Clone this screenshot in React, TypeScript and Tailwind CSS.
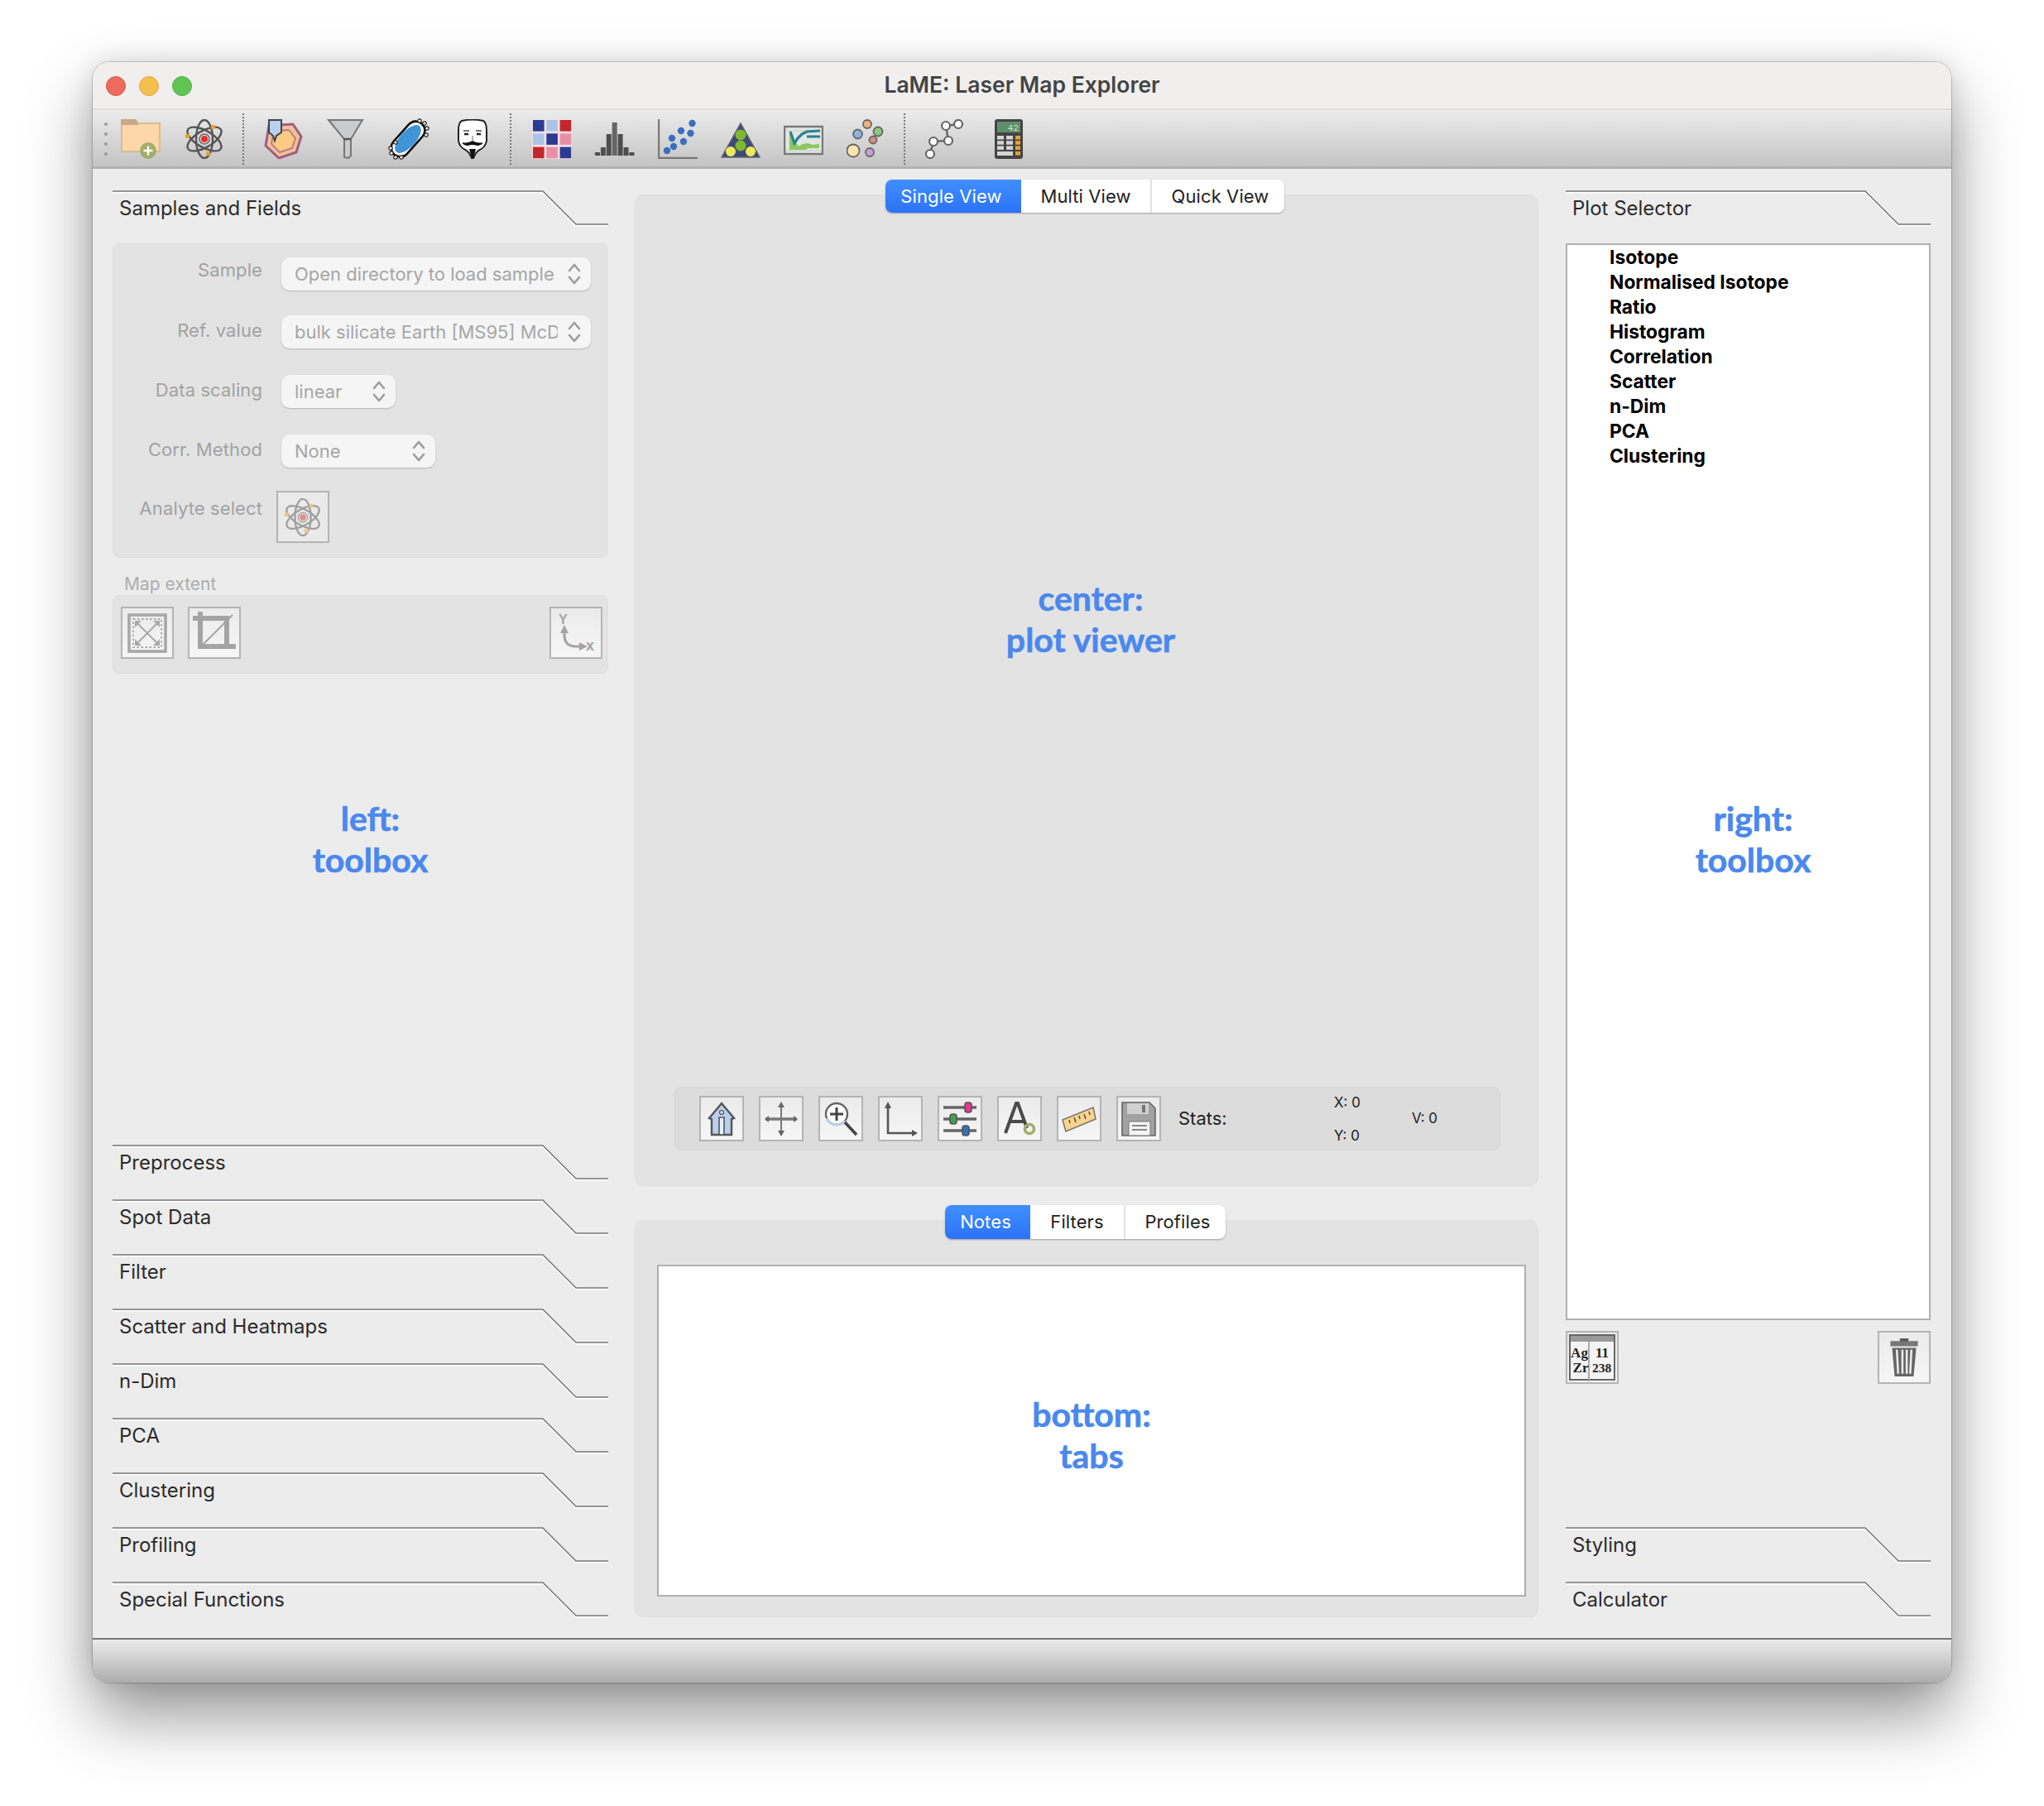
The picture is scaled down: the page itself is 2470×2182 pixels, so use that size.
import type { ReactNode } from "react";

const sans = "font-['Inter','Liberation_Sans',sans-serif]";

function AtomIcon({ size = 48 }: { size?: number }) {
  return (
    <svg width={size} height={size} viewBox="0 0 48 48" fill="none">
      <g stroke="#555" strokeWidth="2.4">
        <ellipse cx="24" cy="24" rx="10" ry="23" />
        <ellipse cx="24" cy="24" rx="10" ry="23" transform="rotate(60 24 24)" />
        <ellipse cx="24" cy="24" rx="10" ry="23" transform="rotate(120 24 24)" />
      </g>
      <circle cx="24" cy="24" r="6" fill="#ddd" stroke="#666" strokeWidth="1.5" />
      <circle cx="24" cy="24" r="4" fill="#e8302a" />
      <rect x="32" y="7" width="5" height="5" rx="1" fill="#efa02c" />
      <rect x="1" y="18" width="5" height="5" rx="1" fill="#efa02c" />
      <rect x="26" y="39" width="5" height="5" rx="1" fill="#efa02c" />
    </svg>
  );
}

function FolderIcon() {
  return (
    <svg width="48" height="48" viewBox="0 0 48 48">
      <rect x="1" y="5" width="46" height="34" fill="#fdd7a8" stroke="#dbbb96" strokeWidth="2" />
      <path d="M0 0h18l3 4v3H0Z" fill="#c9a885" />
      <circle cx="33" cy="38" r="10" fill="#a3ad6c" />
      <path d="M33 32.500v11M27.500 38h11" stroke="#fff" strokeWidth="2.4" />
    </svg>
  );
}

function RegionIcon() {
  return (
    <svg width="48" height="48" viewBox="0 0 48 48">
      <path d="M35 6 45 21 39 40 18 47 2 32 6 8Z" fill="#ecc39a" stroke="#a45c80" strokeWidth="3" />
      <path d="M30 13 38 23 34 35 19 40 9 30 12 14Z" fill="#fec985" stroke="#c07a80" strokeWidth="2" />
      <path d="M6 1h15v15l-6 4-2 6-2-6-5-4Z" fill="#b9d0ef" stroke="#444" strokeWidth="2" />
    </svg>
  );
}

function FunnelIcon() {
  return (
    <svg width="48" height="48" viewBox="0 0 48 48">
      <path d="M2 1h41L29 24v20l-3 3-5-1V24Z" fill="#c9cbcd" stroke="#777" strokeWidth="2" />
      <path d="M20 24h9" stroke="#555" strokeWidth="2.500" />
    </svg>
  );
}

function BlobIcon() {
  const nodes = [[36, 2], [42, 5], [45, 11], [44, 19], [7, 28], [1, 35], [2, 41], [7, 46], [14, 46]];
  return (
    <svg width="48" height="48" viewBox="0 0 48 48" overflow="visible">
      <g transform="translate(-2 0)">
        <rect x="-1" y="13" width="50" height="22" rx="11" transform="rotate(-48 24 24)" fill="#fff" stroke="#111" strokeWidth="2.6" />
        <ellipse cx="24" cy="24" rx="21" ry="9.5" transform="rotate(-48 24 24)" fill="#3f95d8" />
      </g>
      {nodes.map(([x, y], i) => (
        <circle key={i} cx={x} cy={y} r="2.2" fill="#fff" stroke="#222" strokeWidth="1.2" />
      ))}
    </svg>
  );
}

function MaskIcon() {
  return (
    <svg width="48" height="48" viewBox="0 0 48 48">
      <path d="M11 2Q24-1 37 2 41 4 41 14V26Q40 34 31 38L28 41 25 47H23L20 41 17 38Q8 34 7 26V14Q7 4 11 2Z" fill="#fff" stroke="#222" strokeWidth="2" />
      <path d="M13 14h7M28 14h7" stroke="#777" strokeWidth="2" />
      <path d="M14 18h5M29 18h5" stroke="#222" strokeWidth="2.4" />
      <path d="M24 20v6" stroke="#999" strokeWidth="1.5" />
      <path d="M12 29q6 1 12-2 6 3 12 2-4 3-7 2l-5-1-5 1q-3 1-7-2Z" fill="#111" stroke="#111" strokeWidth="1.4" />
      <path d="M20 36h8l-3 11h-2Z" fill="#111" />
    </svg>
  );
}

function HeatmapIcon() {
  const cells = ["#2b3a92", "#a9c4e6", "#c1272d", "#a9c4e6", "#2b3a92", "#e88fa3", "#c1272d", "#e88fa3", "#2b3a92"];
  return (
    <svg width="48" height="48" viewBox="0 0 48 48">
      <rect width="48" height="48" fill="#f6dfe4" />
      {cells.map((c, i) => (
        <rect key={i} x={1 + (i % 3) * 16.3} y={1 + Math.floor(i / 3) * 16.3} width="13.6" height="13.6" fill={c} />
      ))}
    </svg>
  );
}

function HistogramIcon() {
  const bars = [4, 10, 26, 40, 26, 10, 4];
  return (
    <svg width="48" height="48" viewBox="0 0 48 48">
      {bars.map((h, i) => (
        <rect key={i} x={i * 6.9} y={44 - h} width="6" height={h} fill={i === 3 ? "#666" : "#4e4e4e"} />
      ))}
    </svg>
  );
}

function ScatterIcon() {
  const dots = [[41.5, 5], [28, 14], [39.5, 17], [17, 23], [31, 27], [19, 33], [11, 38]];
  return (
    <svg width="48" height="48" viewBox="0 0 48 48">
      <path d="M1 0v47h47" fill="none" stroke="#777" strokeWidth="2.4" />
      {dots.map(([x, y], i) => (
        <circle key={i} cx={x} cy={y} r="4.2" fill="#3a6fbf" />
      ))}
    </svg>
  );
}

function TernaryIcon() {
  return (
    <svg width="48" height="48" viewBox="0 0 48 48">
      <path d="M24 5 47 46H1Z" fill="#3d4a7c" stroke="#666" strokeWidth="1.5" />
      <circle cx="24" cy="19" r="6.5" fill="#7fb82d" />
      <circle cx="24" cy="32" r="6.5" fill="#7fb82d" />
      <circle cx="12" cy="39" r="6" fill="#f0e858" />
      <circle cx="36" cy="39" r="6" fill="#f0e858" />
    </svg>
  );
}

function SpectrumIcon() {
  return (
    <svg width="48" height="48" viewBox="0 0 48 48">
      <rect x="1" y="9" width="46" height="33" fill="#e0e6e0" stroke="#777" strokeWidth="2.4" />
      <path d="M3 14h42M3 38h42" stroke="#c5cfc5" strokeWidth="1" />
      <path d="M8 16l4 16 3-2 3 4 5-3 6-1 6 2 7-1v3H30l-4 2H8Z" fill="#8cc860" stroke="#8cc860" strokeWidth="2" />
      <path d="M8 15l5 14 4-6 5-5 6-3 16-1M28 21h16" fill="none" stroke="#2b7f96" strokeWidth="3.200" />
    </svg>
  );
}

function ClustersIcon() {
  const dots = [
    [25, 6, 5, "#f0b080"],
    [38, 15, 5.5, "#8fc878"],
    [13.5, 18, 5.5, "#8fb0e0"],
    [32, 25, 4.5, "#e08a80"],
    [8, 38, 7.5, "#fde4a8"],
    [28, 40, 5, "#c8a0d8"],
  ] as const;
  return (
    <svg width="48" height="48" viewBox="0 0 48 48">
      {dots.map(([x, y, r, c], i) => (
        <circle key={i} cx={x} cy={y} r={r} fill={c} stroke="#666" strokeWidth="1.8" />
      ))}
    </svg>
  );
}

function NetworkIcon() {
  const nodes = [[41, 6], [26, 8], [29, 26], [11, 27], [7, 42]];
  return (
    <svg width="48" height="48" viewBox="0 0 48 48">
      <path d="M41 6 26 8 29 26 11 27 7 42" fill="none" stroke="#666" strokeWidth="2.4" />
      {nodes.map(([x, y], i) => (
        <circle key={i} cx={x} cy={y} r="5" fill="#fff" stroke="#666" strokeWidth="2.2" />
      ))}
    </svg>
  );
}

function CalculatorIcon() {
  const keys = [0, 1, 2].flatMap((r) => [0, 1].map((c) => [c, r]));
  return (
    <svg width="34" height="48" viewBox="0 0 34 48">
      <rect width="34" height="48" rx="3" fill="#444" />
      <rect x="3" y="3" width="28" height="13" fill="#5f8f6a" />
      <text x="29" y="14" textAnchor="end" fontSize="11" fontFamily="'Liberation Mono', monospace" fill="#cfe5d0">42</text>
      {keys.map(([c, r], i) => (
        <rect key={i} x={3 + c * 11} y={20 + r * 6.2} width="8" height="4.5" fill="#d5d5d5" />
      ))}
      <rect x="3" y="39" width="19" height="5" fill="#d5d5d5" />
      {[20, 26.2, 32.4, 39].map((y) => (
        <rect key={y} x="25" y={y} width="6" height="4.5" fill="#f0a030" />
      ))}
    </svg>
  );
}

function ExtentIcon() {
  return (
    <svg width="50" height="50" viewBox="0 0 50 50" fill="none" stroke="#a8a8a8">
      <rect x="3" y="3" width="44" height="44" strokeWidth="3.600" />
      <rect x="8" y="8" width="34" height="34" strokeWidth="1.800" strokeDasharray="2.500 2.500" />
      <path d="M11 11 39 39M39 11 11 39" strokeWidth="2" />
      <path d="M10 10h8l-8 8ZM40 10h-8l8 8ZM10 40h8l-8-8ZM40 40h-8l8-8Z" fill="#a8a8a8" stroke="none" />
    </svg>
  );
}

function CropIcon() {
  return (
    <svg width="52" height="52" viewBox="0 0 52 52" fill="none" stroke="#a4a4a4">
      <path d="M0 8h41v36M9 0v42h43" strokeWidth="6" />
      <path d="M9 43 48 4" strokeWidth="2" />
    </svg>
  );
}

function AxesXYIcon() {
  return (
    <svg width="52" height="52" viewBox="0 0 52 52" fill="none" stroke="#a4a4a4">
      <text x="5" y="15" fontSize="16" fontWeight="700" fontFamily="'Liberation Sans', sans-serif" fill="#a4a4a4" stroke="none">Y</text>
      <text x="38" y="47" fontSize="18" fontWeight="700" fontFamily="'Liberation Sans', sans-serif" fill="#a4a4a4" stroke="none">x</text>
      <path d="M12 20v8q0 14 14 14h8" strokeWidth="3" />
      <path d="M12 16l-5 10h10ZM40 42l-10-5v10Z" fill="#a4a4a4" stroke="none" />
    </svg>
  );
}

function HomeIcon() {
  return (
    <svg width="36" height="42" viewBox="0 0 36 42">
      <path d="M3 20 18 2l15 18-3 1v19H6V21Z" fill="#b8cfee" stroke="#555" strokeWidth="2.4" />
      <path d="M15 19h6v21h-6Z" fill="#e8eef8" stroke="#555" strokeWidth="1.6" />
      <circle cx="18" cy="13" r="2.4" fill="#fff" stroke="#555" strokeWidth="1.4" />
    </svg>
  );
}

function PanIcon() {
  return (
    <svg width="40" height="42" viewBox="0 0 40 42">
      <path d="M20 3v36" stroke="#777" strokeWidth="2" />
      <path d="M1 21h38" stroke="#777" strokeWidth="3.5" />
      <path d="M20 0l-4 7h8ZM20 42l-4-7h8ZM0 21l5-4v8ZM40 21l-5-4v8Z" fill="#666" />
      <path d="M26 28l4 4m0-4-4 4" stroke="#fff" strokeWidth="1.5" />
    </svg>
  );
}

function ZoomIcon() {
  return (
    <svg width="42" height="42" viewBox="0 0 42 42" fill="none">
      <circle cx="16" cy="15" r="13" fill="#fff" stroke="#666" strokeWidth="2.4" />
      <path d="M4 20a13 13 0 0 0 22 3" stroke="#b8cfee" strokeWidth="3" />
      <path d="M16 7v16M8 15h16" stroke="#444" strokeWidth="3" />
      <path d="M26 25 40 40" stroke="#444" strokeWidth="3.6" />
    </svg>
  );
}

function AxesIcon() {
  return (
    <svg width="42" height="42" viewBox="0 0 42 42" fill="none">
      <path d="M6 4v34h32" stroke="#555" strokeWidth="2.6" />
      <path d="M6 0 2 8h8ZM42 38l-7-4v8Z" fill="#555" />
    </svg>
  );
}

function SlidersIcon() {
  return (
    <svg width="42" height="42" viewBox="0 0 42 42" fill="none">
      <path d="M1 7h40M1 21h40M1 35h40" stroke="#666" strokeWidth="3.4" />
      <rect x="27" y="1" width="8" height="12" rx="3" fill="#e23a8a" stroke="#555" strokeWidth="1.6" />
      <rect x="9" y="15" width="8" height="12" rx="3" fill="#3da44a" stroke="#555" strokeWidth="1.6" />
      <rect x="24" y="29" width="8" height="12" rx="3" fill="#2f73c8" stroke="#555" strokeWidth="1.6" />
    </svg>
  );
}

function AnnotateIcon() {
  return (
    <svg width="40" height="42" viewBox="0 0 40 42" fill="none">
      <path d="M3 38 16 2h2l11 30M8 24h17" stroke="#4a4a4a" strokeWidth="4" />
      <circle cx="32" cy="33" r="5.5" stroke="#a3ad6c" strokeWidth="3.6" />
    </svg>
  );
}

function RulerIcon() {
  return (
    <svg width="42" height="42" viewBox="0 0 42 42">
      <path d="M1 22 38 7l3 14L5 36Z" fill="#fbd58c" stroke="#777" strokeWidth="1.6" />
      <path d="M9 22l1 4M15 19l2 6M21 17l1 4M27 15l2 6M33 12l1 4" stroke="#555" strokeWidth="1.6" />
    </svg>
  );
}

function SaveIcon() {
  return (
    <svg width="42" height="42" viewBox="0 0 42 42">
      <path d="M1 1h33l7 7v33H1Z" fill="#a2a2a2" stroke="#666" strokeWidth="1.6" />
      <rect x="7" y="2" width="26" height="13" fill="#d0d0d0" />
      <rect x="25" y="4" width="4" height="9" fill="#777" />
      <rect x="9" y="24" width="26" height="17" fill="#f4f4f4" stroke="#777" strokeWidth="1" />
      <path d="M13 29h18M13 34h18" stroke="#888" strokeWidth="2" />
    </svg>
  );
}

function TableIcon() {
  return (
    <svg width="56" height="56" viewBox="0 0 56 56">
      <rect x="1" y="1" width="54" height="54" fill="#f4f4f4" stroke="#666" strokeWidth="2" />
      <rect x="2" y="2" width="52" height="7" fill="#999" />
      <path d="M24 9v46" stroke="#aaa" strokeWidth="2" />
      <g fontFamily="'Liberation Serif', serif" fontWeight="700" fontSize="17" fill="#222" textAnchor="middle">
        <text x="12.500" y="28">Ag</text>
        <text x="14" y="46">Zr</text>
        <text x="40" y="28">11</text>
        <text x="39.500" y="46" fontSize="15.500">238</text>
      </g>
    </svg>
  );
}

function TrashIcon() {
  return (
    <svg width="36" height="52" viewBox="0 0 34 50" fill="none">
      <path d="M12 3h10v5H12Z" fill="#555" />
      <path d="M1 6h32v6H1Z" fill="#777" />
      <path d="M3 14h28l-3 33H6Z" fill="#666" />
      <path d="M8.500 16l1.500 28M15 16v28M20 16v28M25.500 16 24 44" stroke="#eee" strokeWidth="2.4" />
    </svg>
  );
}

function Chevrons() {
  return (
    <svg width="16" height="26" viewBox="0 0 16 26" fill="none" stroke="#9c9c9c" strokeWidth="2.6" strokeLinecap="round" strokeLinejoin="round">
      <path d="M2 9l6-7 6 7M2 17l6 7 6-7" />
    </svg>
  );
}

function ToolboxHeader({ title, width }: { title: string; width: number }) {
  const a = width - 79;
  const b = width - 39;
  return (
    <div className="relative h-[41px] shrink-0" style={{ width }}>
      <svg className="absolute left-0 top-0" width={width} height="44" fill="none">
        <path d={`M0 2.500H${a}L${b} 42.500H${width}`} stroke="#fff" strokeWidth="2" />
        <path d={`M0 1H${a}L${b} 41H${width}`} stroke="#777" strokeWidth="1.500" />
      </svg>
      <div className="relative flex h-full items-center pl-[8px] pt-[3px] text-[24px] text-[#2b2b2b]">{title}</div>
    </div>
  );
}

function Annotation({ lines }: { lines: string[] }) {
  return (
    <div className="text-center font-['Lato','Open_Sans',sans-serif] text-[41px] font-bold leading-[50px] text-[#4a88ee] [-webkit-text-stroke:0.6px_#4a88ee]">
      {lines.map((l) => (
        <div key={l}>{l}</div>
      ))}
    </div>
  );
}

function SelectBox({ text, className }: { text: string; className: string }) {
  return (
    <div className={`flex h-[40px] items-center justify-between rounded-[10px] bg-[#f5f5f5] pl-[16px] pr-[12px] text-[22px] text-[#a6a6a6] shadow-[0_1px_2px_rgba(0,0,0,0.2)] ${className}`}>
      <span className="w-full overflow-hidden whitespace-nowrap">{text}</span>
      <span className="ml-[12px] shrink-0"><Chevrons /></span>
    </div>
  );
}

function FieldRow({ label, shift, children }: { label: string; shift: string; children: ReactNode }) {
  return (
    <div className="flex items-center">
      <div className={`w-[180px] whitespace-nowrap text-right text-[22px] leading-[26px] tracking-[0.1px] text-[#a2a2a2] ${shift}`}>{label}</div>
      {children}
    </div>
  );
}

function SquareButton({ children, className = "" }: { children: ReactNode; className?: string }) {
  return (
    <div className={`flex items-center justify-center border-[2px] border-[#b4b4b4] bg-gradient-to-b from-[#ebebeb] to-[#f6f6f6] ${className}`}>
      {children}
    </div>
  );
}

function Segmented({ tabs, height }: { tabs: [string, string][]; height: string }) {
  return (
    <div className={`flex overflow-hidden rounded-[8px] bg-white text-[22px] tracking-[0.1px] text-[#222] shadow-[0_1px_2px_rgba(0,0,0,0.3)] ${height}`}>
      {tabs.map(([name, w], i) => (
        <div
          key={name}
          className={`flex items-center justify-center ${w} ${i === 0 ? "bg-gradient-to-b from-[#418fff] to-[#2b72f8] pr-[5px] text-white" : ""} ${i === 2 ? "border-l-[2px] border-[#e2e2e2] pl-[5px]" : ""}`}
        >
          {name}
        </div>
      ))}
    </div>
  );
}

const lowerLeft = ["Preprocess", "Spot Data", "Filter", "Scatter and Heatmaps", "n-Dim", "PCA", "Clustering", "Profiling", "Special Functions"];
const plotTypes = ["Isotope", "Normalised Isotope", "Ratio", "Histogram", "Correlation", "Scatter", "n-Dim", "PCA", "Clustering"];
const plotTools = [HomeIcon, PanIcon, ZoomIcon, AxesIcon, SlidersIcon, AnnotateIcon, RulerIcon, SaveIcon];

function ToolSep({ className }: { className: string }) {
  return <div className={`h-[62px] w-0 border-l-[2px] border-dotted border-[#777] ${className}`} />;
}

export default function App() {
  return (
    <div className={`h-[2182px] w-[2470px] overflow-hidden bg-white pl-[112px] pt-[75px] ${sans}`}>
      <div className="flex h-[1958px] w-[2246px] flex-col overflow-hidden rounded-[20px] shadow-[0_0_0_1px_rgba(0,0,0,0.18),0_40px_80px_rgba(0,0,0,0.42),0_0_30px_rgba(0,0,0,0.12)]">
        {/* Title bar */}
        <div className="relative flex h-[58px] shrink-0 items-center justify-center border-b-[2px] border-[#dcdcdc] bg-[#f0efee]">
          <div className="absolute left-[16px] top-[17px] flex gap-[16px]">
            <div className="h-[24px] w-[24px] rounded-full border border-[#d9544c] bg-[#ed6a5e]" />
            <div className="h-[24px] w-[24px] rounded-full border border-[#dca53e] bg-[#f5bf4f]" />
            <div className="h-[24px] w-[24px] rounded-full border border-[#4fae48] bg-[#61c554]" />
          </div>
          <div className="text-[26.5px] font-semibold text-[#444]">LaME: Laser Map Explorer</div>
        </div>

        {/* Toolbar */}
        <div className="flex h-[71px] shrink-0 items-center border-b-[3px] border-[#b2b2b2] bg-gradient-to-b from-[#ececec] to-[#c4c4c4] pl-[14px] pt-[2px]">
          <div className="flex flex-col gap-[8px]">
            {[0, 1, 2, 3].map((d) => (
              <div key={d} className="h-[4px] w-[4px] rounded-full bg-[#9a9a9a]" />
            ))}
          </div>
          <div className="ml-[16px] flex gap-[29px]">
            <FolderIcon />
            <AtomIcon />
          </div>
          <ToolSep className="ml-[22px]" />
          <div className="ml-[24px] flex gap-[28px]">
            <RegionIcon />
            <FunnelIcon />
            <BlobIcon />
            <MaskIcon />
          </div>
          <ToolSep className="ml-[21px]" />
          <div className="ml-[25px] flex gap-[28px]">
            <HeatmapIcon />
            <HistogramIcon />
            <ScatterIcon />
            <TernaryIcon />
            <SpectrumIcon />
            <ClustersIcon />
          </div>
          <ToolSep className="ml-[21px]" />
          <div className="ml-[23px] flex items-center gap-[37px]">
            <NetworkIcon />
            <CalculatorIcon />
          </div>
        </div>

        {/* Main area */}
        <div className="flex min-h-0 flex-1 bg-[#ececec] pl-[24px]">
          {/* Left toolbox */}
          <div className="flex w-[599px] shrink-0 flex-col pb-[27px] pt-[26px]">
            <ToolboxHeader title="Samples and Fields" width={599} />
            <div className="mt-[23px] flex flex-col rounded-[8px] border border-[#dedede] bg-[#e3e3e3] pb-[17px] pt-[16px]">
              <FieldRow label="Sample" shift="mb-[10px]">
                <div className="ml-[23px]"><SelectBox text="Open directory to load sample" className="w-[374px]" /></div>
              </FieldRow>
              <div className="mt-[30px]">
                <FieldRow label="Ref. value" shift="mb-[4px]">
                  <div className="ml-[23px]"><SelectBox text="bulk silicate Earth [MS95] McDonough &amp; Sun" className="w-[374px]" /></div>
                </FieldRow>
              </div>
              <div className="mt-[32px]">
                <FieldRow label="Data scaling" shift="mb-[4px]">
                  <div className="ml-[23px]"><SelectBox text="linear" className="w-[138px]" /></div>
                </FieldRow>
              </div>
              <div className="mt-[32px]">
                <FieldRow label="Corr. Method" shift="mb-[4px]">
                  <div className="ml-[23px]"><SelectBox text="None" className="w-[186px]" /></div>
                </FieldRow>
              </div>
              <div className="mt-[28px]">
                <FieldRow label="Analyte select" shift="mb-[22px]">
                  <SquareButton className="ml-[17px] h-[63px] w-[64px] !bg-none bg-[#eaeaea]">
                    <div className="opacity-50"><AtomIcon size={46} /></div>
                  </SquareButton>
                </FieldRow>
              </div>
            </div>
            <div className="mt-[20px] pl-[14px] text-[21px] leading-[24px] text-[#adadad]">Map extent</div>
            <div className="mt-px flex rounded-[8px] border border-[#dedede] bg-[#e3e3e3] pb-[17px] pl-[9px] pr-[6px] pt-[13px]">
              <SquareButton className="h-[63px] w-[64px]"><ExtentIcon /></SquareButton>
              <SquareButton className="ml-[17px] h-[63px] w-[64px]"><CropIcon /></SquareButton>
              <SquareButton className="ml-auto h-[63px] w-[64px]"><AxesXYIcon /></SquareButton>
            </div>
            <div className="flex-1 pl-[24px] pt-[150px]">
              <Annotation lines={["left:", "toolbox"]} />
            </div>
            <div className="flex flex-col gap-[25px]">
              {lowerLeft.map((t) => (
                <ToolboxHeader key={t} title={t} width={599} />
              ))}
            </div>
          </div>

          {/* Center */}
          <div className="ml-[32px] flex w-[1092px] shrink-0 flex-col pt-[31px]">
            <div className="flex h-[1198px] flex-col rounded-[10px] border border-[#dfdfdf] bg-[#e3e3e3]">
              <div className="-mt-[19px] flex justify-center pr-[4px]">
                <Segmented height="h-[40px]" tabs={[["Single View", "w-[164px]"], ["Multi View", "w-[156px]"], ["Quick View", "w-[162px]"]]} />
              </div>
              <div className="flex-1 pl-[10px] pt-[441px]">
                <Annotation lines={["center:", "plot viewer"]} />
              </div>
              <div className="mb-[42px] ml-[47px] mr-[45px] flex h-[77px] items-center rounded-[8px] border border-[#d6d6d6] bg-[#dcdcdc] pl-[29px]">
                <div className="flex gap-[18px]">
                  {plotTools.map((Icon, i) => (
                    <SquareButton key={i} className="h-[55px] w-[54px]"><Icon /></SquareButton>
                  ))}
                </div>
                <div className="ml-[21px] w-[188px] text-[22px] text-[#222]">Stats:</div>
                <div className="flex h-[62px] w-[94px] flex-col justify-between text-[17px] leading-[22px] text-[#222]">
                  <div>X: 0</div>
                  <div>Y: 0</div>
                </div>
                <div className="text-[17px] text-[#222]">V: 0</div>
              </div>
            </div>
            <div className="mt-[41px] flex h-[480px] flex-col rounded-[10px] border border-[#dfdfdf] bg-[#e3e3e3]">
              <div className="-mt-[19px] flex justify-center pr-[3px]">
                <Segmented height="h-[41px]" tabs={[["Notes", "w-[103px]"], ["Filters", "w-[113px]"], ["Profiles", "w-[123px]"]]} />
              </div>
              <div className="ml-[26px] mr-[14px] mt-[31px] flex h-[401px] flex-col items-center justify-center border-[2px] border-[#b0b0b0] bg-white pt-[10px]">
                <Annotation lines={["bottom:", "tabs"]} />
              </div>
            </div>
          </div>

          {/* Right toolbox */}
          <div className="ml-[33px] flex w-[441px] shrink-0 flex-col pb-[27px] pt-[26px]">
            <ToolboxHeader title="Plot Selector" width={441} />
            <div className="mt-[23px] h-[1301px] border-[2px] border-[#b0b0b0] bg-white">
              <div className="flex flex-col pl-[51px]">
                {plotTypes.map((t) => (
                  <div key={t} className="h-[30px] text-[22.8px] font-bold leading-[30px] text-black">{t}</div>
                ))}
              </div>
              <div className="mt-[398px] pl-[12px]">
                <Annotation lines={["right:", "toolbox"]} />
              </div>
            </div>
            <div className="mt-[13px] flex justify-between">
              <SquareButton className="h-[64px] w-[64px]"><TableIcon /></SquareButton>
              <SquareButton className="h-[64px] w-[64px]"><TrashIcon /></SquareButton>
            </div>
            <div className="flex-1" />
            <div className="flex flex-col gap-[25px]">
              <ToolboxHeader title="Styling" width={441} />
              <ToolboxHeader title="Calculator" width={441} />
            </div>
          </div>
        </div>

        {/* Status bar */}
        <div className="h-[54px] shrink-0 border-t-[2px] border-[#777] bg-gradient-to-b from-[#ebebeb] to-[#adadad]" />
      </div>
    </div>
  );
}
